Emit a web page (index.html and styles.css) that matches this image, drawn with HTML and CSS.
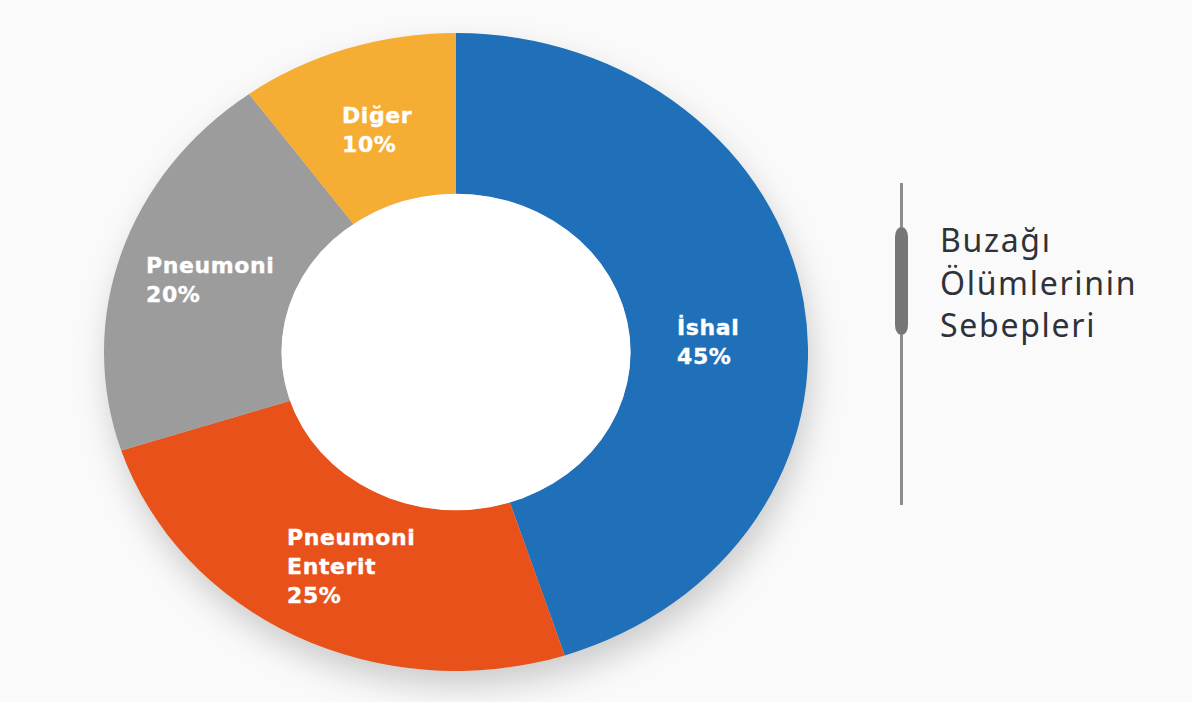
FILE: index.html
```html
<!DOCTYPE html>
<html lang="tr">
<head>
<meta charset="utf-8">
<title>Buzağı Ölümlerinin Sebepleri</title>
<link rel="stylesheet" href="styles.css">
</head>
<body>
<div class="page">
  <div class="chart">
    <svg class="donut" viewBox="-100 -100 200 200" preserveAspectRatio="none" width="704" height="638">
      <path fill="#1f6fb9" d="M0,-100 A100,100 0 0 1 30.90,95.11 L15.30,47.08 A49.5,49.5 0 0 0 0,-49.5 Z"/>
      <path fill="#e8521a" d="M30.90,95.11 A100,100 0 0 1 -95.11,30.90 L-47.08,15.30 A49.5,49.5 0 0 0 15.30,47.08 Z"/>
      <path fill="#9c9c9c" d="M-95.11,30.90 A100,100 0 0 1 -58.78,-80.90 L-29.10,-40.05 A49.5,49.5 0 0 0 -47.08,15.30 Z"/>
      <path fill="#f6ad33" d="M-58.78,-80.90 A100,100 0 0 1 0,-100 L0,-49.5 A49.5,49.5 0 0 0 -29.10,-40.05 Z"/>
      <circle cx="0" cy="0" r="49.6" fill="#ffffff"/>
    </svg>
    <div class="label label-diger">Diğer<br>10%</div>
    <div class="label label-pneu">Pneumoni<br>20%</div>
    <div class="label label-ishal">İshal<br>45%</div>
    <div class="label label-enterit">Pneumoni<br>Enterit<br>25%</div>
  </div>
  <div class="legend">
    <div class="marker">
      <div class="stem stem-top"></div>
      <div class="knob"></div>
      <div class="stem stem-bottom"></div>
    </div>
    <div class="title">Buzağı<br>Ölümlerinin<br>Sebepleri</div>
  </div>
</div>
</body>
</html>
```

FILE: styles.css
```css
html, body {
  margin: 0;
  padding: 0;
}
body {
  background: #fafafa;
  width: 1192px;
  height: 702px;
  overflow: hidden;
}
.page {
  display: flex;
  align-items: flex-start;
  padding: 33px 0 0 104px;
}
.chart {
  position: relative;
  width: 704px;
  height: 638px;
  flex: none;
}
.donut {
  display: block;
  filter: drop-shadow(4px 16px 16px rgba(0, 0, 0, 0.18));
}
.label {
  position: absolute;
  color: #ffffff;
  font-family: "DejaVu Sans", "Liberation Sans", sans-serif;
  font-weight: bold;
  font-size: 22px;
  line-height: 29px;
  letter-spacing: 0.6px;
  white-space: nowrap;
  -webkit-text-stroke: 0.35px #ffffff;
}
.label-diger { left: 238px; top: 68px; }
.label-pneu { left: 42px; top: 218px; }
.label-ishal { left: 573px; top: 280px; }
.label-enterit { left: 183px; top: 490px; }

.legend {
  display: flex;
  align-items: flex-start;
  margin: 150px 0 0 86px;
}
.marker {
  display: flex;
  flex-direction: column;
  align-items: center;
  width: 14px;
}
.stem {
  width: 3px;
  background: #8c8c8c;
}
.stem-top { height: 44px; }
.stem-bottom { height: 170px; }
.knob {
  width: 13px;
  height: 108px;
  background: #767676;
  border-radius: 6px / 10px;
}
.title {
  margin: 36px 0 0 32px;
  font-family: "Noto Sans", "Open Sans", sans-serif;
  font-size: 32px;
  line-height: 42.5px;
  letter-spacing: 1.7px;
  color: #2e323a;
}
```
